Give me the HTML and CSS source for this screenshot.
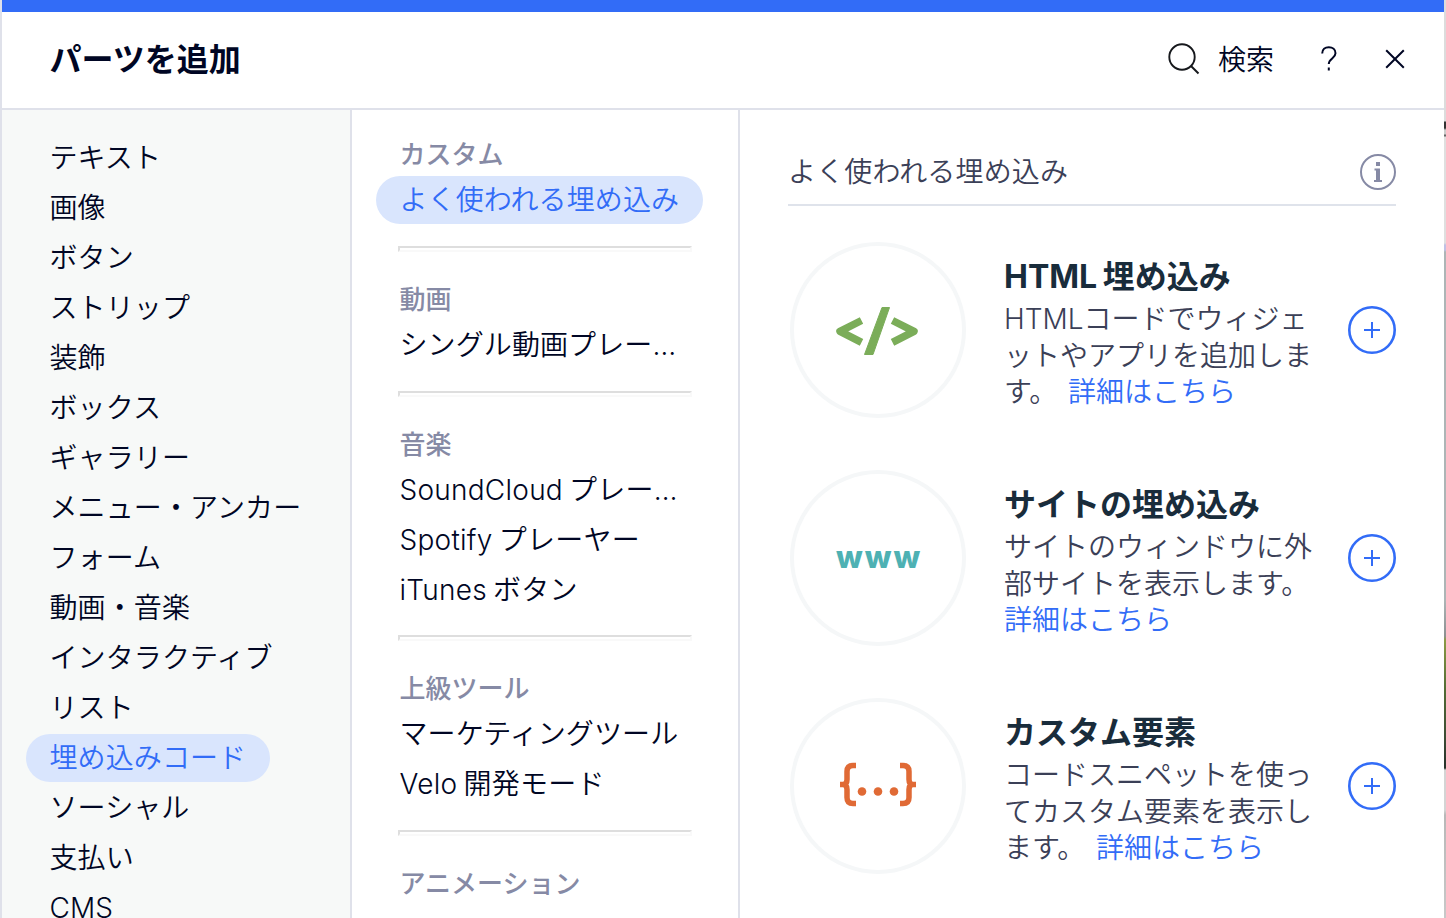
FILE: index.html
```html
<!DOCTYPE html>
<html lang="ja">
<head>
<meta charset="utf-8">
<title>パーツを追加</title>
<link rel="stylesheet" href="styles.css">
</head>
<body>
<div class="window">
<main class="panel">
  <header class="header">
    <h1 class="title">パーツを追加</h1>
    <div class="actions">
      <svg class="search-icon" width="32" height="32" viewBox="0 0 32 32"><circle cx="14" cy="14" r="12.700"/><path d="M23 23l7.500 7.500"/></svg>
      <span class="search-label">検索</span>
      <svg class="help-icon" width="16" height="26" viewBox="0 0 16 26"><path d="M1.200 7.500C1.200 3.500 4 1.200 7.800 1.200s6.700 2.300 6.700 6c0 5.300-6.700 5.300-6.700 10.800M7.800 21.500v3"/></svg>
      <svg class="close-icon" width="20" height="20" viewBox="0 0 20 20"><path d="M1.200 1.200l17.600 17.600M18.800 1.200L1.200 18.800"/></svg>
    </div>
  </header>
  <div class="columns">
    <nav class="categories">
      <a class="item">テキスト</a>
      <a class="item">画像</a>
      <a class="item">ボタン</a>
      <a class="item">ストリップ</a>
      <a class="item">装飾</a>
      <a class="item">ボックス</a>
      <a class="item">ギャラリー</a>
      <a class="item">メニュー・アンカー</a>
      <a class="item">フォーム</a>
      <a class="item">動画・音楽</a>
      <a class="item">インタラクティブ</a>
      <a class="item">リスト</a>
      <a class="item selected">埋め込みコード</a>
      <a class="item">ソーシャル</a>
      <a class="item">支払い</a>
      <a class="item">CMS</a>
    </nav>
    <nav class="sections">
      <h2 class="group">カスタム</h2>
      <a class="item selected">よく使われる埋め込み</a>
      <hr>
      <h2 class="group">動画</h2>
      <a class="item">シングル動画プレー…</a>
      <hr>
      <h2 class="group">音楽</h2>
      <a class="item latin">SoundCloud プレー…</a>
      <a class="item latin">Spotify プレーヤー</a>
      <a class="item latin">iTunes ボタン</a>
      <hr>
      <h2 class="group">上級ツール</h2>
      <a class="item">マーケティングツール</a>
      <a class="item latin">Velo 開発モード</a>
      <hr>
      <h2 class="group">アニメーション</h2>
    </nav>
    <section class="content">
      <div class="content-head">
        <span>よく使われる埋め込み</span>
        <svg width="36" height="36" viewBox="0 0 36 36"><circle cx="18" cy="18" r="17" fill="none" stroke="#868aa5" stroke-width="2"/><path fill="#868aa5" d="M16 8h4v4h-4zM14.500 14.500h5.500v11.500h2v2h-8v-2h2V16.500h-1.500z"/></svg>
      </div>
      <article class="card">
        <svg class="thumb" width="176" height="176" viewBox="0 0 176 176"><circle class="ring" cx="88" cy="88" r="86"/><path fill="none" stroke="#7bad59" stroke-width="7.500" stroke-linejoin="round" d="M71.500 78.500L50 89.300l21.500 11M102.500 78.500L124 89.300l-21.500 11"/><path fill="#7bad59" stroke="#7bad59" stroke-linejoin="round" d="M92 65.500h7.500l-16.500 47h-8.500z"/></svg>
        <div class="text">
          <h3>HTML 埋め込み</h3>
          <p>HTMLコードでウィジェ<br>ットやアプリを追加しま<br>す。 <a class="inline">詳細はこちら</a></p>
        </div>
        <svg class="add" width="48" height="48" viewBox="0 0 48 48"><circle cx="24" cy="24" r="22.700"/><path d="M24 16v16M16 24h16"/></svg>
      </article>
      <article class="card">
        <svg class="thumb" width="176" height="176" viewBox="0 0 176 176"><circle class="ring" cx="88" cy="88" r="86"/><text x="46" y="98" class="www">www</text></svg>
        <div class="text">
          <h3>サイトの埋め込み</h3>
          <p>サイトのウィンドウに外<br>部サイトを表示します。<br><a>詳細はこちら</a></p>
        </div>
        <svg class="add" width="48" height="48" viewBox="0 0 48 48"><circle cx="24" cy="24" r="22.700"/><path d="M24 16v16M16 24h16"/></svg>
      </article>
      <article class="card">
        <svg class="thumb" width="176" height="176" viewBox="0 0 176 176"><circle class="ring" cx="88" cy="88" r="86"/><path fill="none" stroke="#e06a35" stroke-width="5.500" d="M66 67.500h-3q-6 0-6 6v8q0 5-4 5h-3 3q4 0 4 5v8q0 6 6 6h3M110 67.500h3q6 0 6 6v8q0 5 4 5h3-3q-4 0-4 5v8q0 6-6 6h-3"/><g fill="#e06a35"><circle cx="72" cy="93.500" r="4.300"/><circle cx="88" cy="93.500" r="4.300"/><circle cx="104" cy="93.500" r="4.300"/></g></svg>
        <div class="text">
          <h3>カスタム要素</h3>
          <p>コードスニペットを使っ<br>てカスタム要素を表示し<br>ます。 <a class="inline">詳細はこちら</a></p>
        </div>
        <svg class="add" width="48" height="48" viewBox="0 0 48 48"><circle cx="24" cy="24" r="22.700"/><path d="M24 16v16M16 24h16"/></svg>
      </article>
    </section>
  </div>
</main>
</div>
</body>
</html>
```
FILE: styles.css
```css
* { box-sizing: border-box; }
body {
  margin: 0;
  height: 918px;
  overflow: hidden;
  font-family: Inter, "Noto Sans CJK JP", sans-serif;
  font-size: 28px;
  font-weight: 350;
  color: #000624;
}
h1, h2, h3, p { margin: 0; }
svg { display: block; flex: none; }
.window {
  height: 918px;
  padding: 0 2px;
  background: linear-gradient(#dfe1ea, #dfe1ea) left / 2px 100% no-repeat,
    linear-gradient(#dcdcdc 0 121px, #333 122px 128px, #ccc 130px 134px, #666 135px 136px, #dfdfdf 137px 243px, #bfc0e4 245px 250px, #adb5b6 252px 600px, #8c9092 636px, #8b9a45 640px, #526b35 690px, #3c4a35 740px, #26302a 768px, #d4d4d4 770px 810px, #b8b8b8 815px, #c8c8c8 918px) right / 2px 100% no-repeat;
}
.panel {
  height: 918px;
  background: #fff;
  border-top: 12px solid #326cf7;
  overflow: hidden;
}
.header {
  height: 98px;
  display: flex;
  justify-content: space-between;
  align-items: center;
  padding: 0 39px 2px 47.500px;
  border-bottom: 2px solid #dfe1ea;
}
.title { font-size: 32px; font-weight: 700; line-height: 48px; padding-top: 2px; }
.actions { display: flex; align-items: center; line-height: 48px; }
.actions svg { fill: none; stroke: #000624; stroke-width: 2; }
.actions .search-icon { margin-right: 18px; stroke: #16181c; stroke-width: 1.900; }
.search-label { padding-top: 2px; }
.help-icon { margin: 0 48px 0 47px; }
.columns { display: flex; height: 808px; }
.categories {
  width: 350px;
  padding: 24px 0 0 24px;
  background: #f7f9f8;
  border-right: 2px solid #dfe1ea;
}
.sections {
  width: 388px;
  padding: 22.400px 0 0 24px;
  border-right: 2px solid #dfe1ea;
}
.item {
  display: block;
  width: fit-content;
  height: 48px;
  margin-bottom: 2px;
  padding: 0 24px 0 23.500px;
  line-height: 49px;
  letter-spacing: 0.100px;
  border-radius: 24px;
  white-space: nowrap;
}
.latin { word-spacing: -2px; letter-spacing: 0.250px; }
.selected { background: #d9e5fd; color: #326cf7; }
.group {
  height: 44px;
  padding-left: 23.500px;
  font-size: 26px;
  line-height: 45px;
  font-weight: 500;
  color: #868aa5;
}
.sections hr {
  width: 294px;
  height: 6px;
  margin: 21.600px 0 25px 22px;
  border: 2px solid;
  border-color: #dedede #f9f9f9 #f9f9f9 #dedede;
}
.content { flex: 1; padding: 26px 48px 0; }
.content-head {
  height: 70px;
  display: flex;
  justify-content: space-between;
  align-items: center;
  border-bottom: 2px solid #dfe3eb;
  letter-spacing: 0.150px;
  color: #3b4057;
}
.content-head svg { margin-top: 4px; }
.card {
  display: flex;
  height: 176px;
  margin: 36px 0 52px 2px;
}
.card + .card { margin-top: 0; }
.thumb { margin-right: 38px; }
.ring { fill: #fff; stroke: #f5f7f8; stroke-width: 4; }
.www { font: 800 31px Inter, sans-serif; fill: #4eb1b3; letter-spacing: 2px; }
.text { width: 344px; padding-top: 11px; white-space: nowrap; }
.text h3 { font-size: 32px; line-height: 48px; font-weight: 700; word-spacing: -2px; color: #192c3b; }
.text p { line-height: 36.500px; color: #3b4057; }
.text a { color: #326cf7; }
.text .inline { margin-left: 3px; }
.add { margin-top: 64px; fill: none; stroke: #326cf7; stroke-width: 2.600; }
.add path { stroke-width: 2; }
```
